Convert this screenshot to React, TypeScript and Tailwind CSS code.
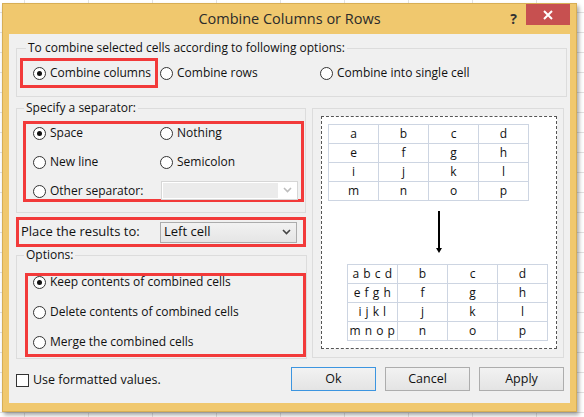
import clsx from 'clsx';

const Radio = ({ checked = false }: { checked?: boolean }) => (
  <span className="w-[13px] h-[13px] rounded-full border border-[#333] bg-white flex items-center justify-center shrink-0">
    {checked && <span className="w-[5px] h-[5px] rounded-full bg-[#111]" />}
  </span>
);

const Opt = ({
  label,
  checked = false,
  className = '',
}: {
  label: string;
  checked?: boolean;
  className?: string;
}) => (
  <div className={clsx('flex items-center gap-[4px] whitespace-nowrap', className)}>
    <Radio checked={checked} />
    <span>{label}</span>
  </div>
);

const Chevron = ({ color }: { color: string }) => (
  <svg width="9" height="6" viewBox="0 0 9 6">
    <path d="M1 1 L4.5 4.5 L8 1" fill="none" stroke={color} strokeWidth="1.6" />
  </svg>
);

const Table = ({ rows }: { rows: string[][] }) => (
  <div className="grid grid-cols-4 w-[201px] border-l border-t border-[#cdd5e2] bg-white">
    {rows.flat().map((c, i) => (
      <div
        key={i}
        className={clsx(
          'h-[19px] border-r border-b border-[#cdd5e2] flex items-center justify-center whitespace-nowrap text-[12px] leading-none text-[#111]',
          c.length > 1 && 'tracking-[0.5px]'
        )}
      >
        {c}
      </div>
    ))}
  </div>
);

const before = [
  ['a', 'b', 'c', 'd'],
  ['e', 'f', 'g', 'h'],
  ['i', 'j', 'k', 'l'],
  ['m', 'n', 'o', 'p'],
];

const after = [
  ['a b c d', 'b', 'c', 'd'],
  ['e f g h', 'f', 'g', 'h'],
  ['i j k l', 'j', 'k', 'l'],
  ['m n o p', 'n', 'o', 'p'],
];

const Button = ({ label, primary = false }: { label: string; primary?: boolean }) => (
  <button
    type="button"
    className={clsx(
      'w-[85px] h-[24px] border bg-linear-to-b from-[#f2f2f2] to-[#e4e4e4] text-[12.5px] text-[#111]',
      primary ? 'border-[#3c95e0]' : 'border-[#adadad]'
    )}
  >
    {label}
  </button>
);

export default function App() {
  return (
    <div className="w-[584px] h-[417px] overflow-hidden bg-white bg-[linear-gradient(to_right,#e2e2e2_1px,transparent_1px),linear-gradient(to_bottom,#e2e2e2_1px,transparent_1px)] bg-size-[64px_20px] bg-position-[24px_12px] pt-[3px] pl-[2px] font-['Open_Sans',sans-serif] text-[12px] text-[#111]">
      <div className="w-[575px] h-[409px] bg-[#f0c86e] border border-[#d7ae55] flex flex-col shadow-[2px_3px_4px_rgba(0,0,0,0.35)]">
        {/* title bar */}
        <div className="relative h-[30px] flex items-center justify-center">
          <span className="text-[14.5px] text-[#2b2b2b] pb-[1px]">Combine Columns or Rows</span>
          <span className="absolute right-[59px] top-[4px] text-[14px] font-bold text-[#333]">?</span>
          <div className="absolute right-[6px] top-0 w-[44px] h-[21px] bg-[#c75050] flex items-center justify-center">
            <svg width="10" height="10" viewBox="0 0 10 10">
              <path d="M1 1 L9 9 M9 1 L1 9" stroke="white" strokeWidth="2" />
            </svg>
          </div>
        </div>

        {/* content */}
        <div className="mx-[6px] h-[369px] bg-[#f0f0f0] flex flex-col">
          <fieldset className="mt-[6px] ml-[7px] w-[551px] h-[57px] border border-[#dcdcdc]">
            <legend className="ml-[9px] px-[2px] leading-[16px]">
              To combine selected cells according to following options:
            </legend>
            <div className="flex items-center mt-[2px] ml-[3px]">
              <div className="w-[138px] h-[30px] border-[3px] border-[#f23a3a] pl-[10px] flex items-center">
                <Opt label="Combine columns" checked />
              </div>
              <Opt label="Combine rows" className="ml-[2px] w-[160px]" />
              <Opt label="Combine into single cell" />
            </div>
          </fieldset>

          <div className="flex mt-[3px] ml-[7px] gap-[6px]">
            <div className="w-[290px] flex flex-col">
              <fieldset className="h-[113px] border border-[#dcdcdc]">
                <legend className="ml-[7px] px-[2px] leading-[16px]">Specify a separator:</legend>
                <div className="mt-[5px] ml-[6px] w-[281px] h-[81px] border-[3px] border-[#f23a3a] pl-[7px] flex flex-col gap-[11px]">
                  <div className="h-[18px] flex items-center">
                    <Opt label="Space" checked className="w-[127px]" />
                    <Opt label="Nothing" />
                  </div>
                  <div className="h-[18px] flex items-center">
                    <Opt label="New line" className="w-[127px]" />
                    <Opt label="Semicolon" />
                  </div>
                  <div className="h-[18px] flex items-center">
                    <Opt label="Other separator:" className="w-[128px]" />
                    <div className="w-[137px] h-[19px] mt-[-2px] border border-[#d6d6d6] bg-white flex items-center pl-[1px] pr-[5px]">
                      <div className="w-[115px] h-[15px] bg-[#ebebeb]" />
                      <div className="ml-auto">
                        <Chevron color="#bdbdbd" />
                      </div>
                    </div>
                  </div>
                </div>
              </fieldset>

              <div className="mt-[4px] h-[30px] border-[3px] border-[#f23a3a] flex items-center">
                <span className="w-[141px] pl-[2px] text-[13px]">Place the results to:</span>
                <div className="w-[137px] h-[21px] border border-[#acacac] bg-linear-to-b from-[#f2f2f2] to-[#e5e5e5] flex items-center pl-[3px] pr-[5px] text-[13px]">
                  <span>Left cell</span>
                  <div className="ml-auto">
                    <Chevron color="#444" />
                  </div>
                </div>
              </div>

              <fieldset className="h-[112px] border border-[#dcdcdc]">
                <legend className="ml-[7px] px-[2px] leading-[16px]">Options:</legend>
                <div className="mt-[10px] ml-[8px] w-[281px] h-[84px] border-[3px] border-[#f23a3a] pl-[5px] flex flex-col gap-[18px]">
                  <div className="h-[12px] flex items-center">
                    <Opt label="Keep contents of combined cells" checked />
                  </div>
                  <div className="h-[12px] flex items-center">
                    <Opt label="Delete contents of combined cells" />
                  </div>
                  <div className="h-[12px] flex items-center">
                    <Opt label="Merge the combined cells" />
                  </div>
                </div>
              </fieldset>
            </div>

            <div className="mt-[8px] w-[252px] h-[250px] border border-[#dcdcdc] pl-[8px] pt-[7px]">
              <div className="w-[236px] h-[233px] border border-dashed border-[#555] bg-white flex flex-col">
                <div className="ml-[6px] mt-[7px]">
                  <Table rows={before} />
                </div>
                <svg className="ml-[113px] mt-[10px]" width="8" height="42" viewBox="0 0 8 42">
                  <path d="M4 0 V38" stroke="#000" strokeWidth="2" />
                  <path d="M1 37 L7 37 L4 42 Z" fill="#000" />
                </svg>
                <div className="ml-[25px] mt-[11px]">
                  <Table rows={after} />
                </div>
              </div>
            </div>
          </div>

          <div className="flex pt-[8px] pl-[7px] pr-[6px]">
            <div className="flex items-center gap-[4px] mt-[6px] h-[14px] text-[12.5px]">
              <span className="w-[13px] h-[13px] border border-[#333] bg-white" />
              <span>Use formatted values.</span>
            </div>
            <div className="ml-auto flex gap-[9px]">
              <Button label="Ok" primary />
              <Button label="Cancel" />
              <Button label="Apply" />
            </div>
          </div>
        </div>
      </div>
    </div>
  );
}
